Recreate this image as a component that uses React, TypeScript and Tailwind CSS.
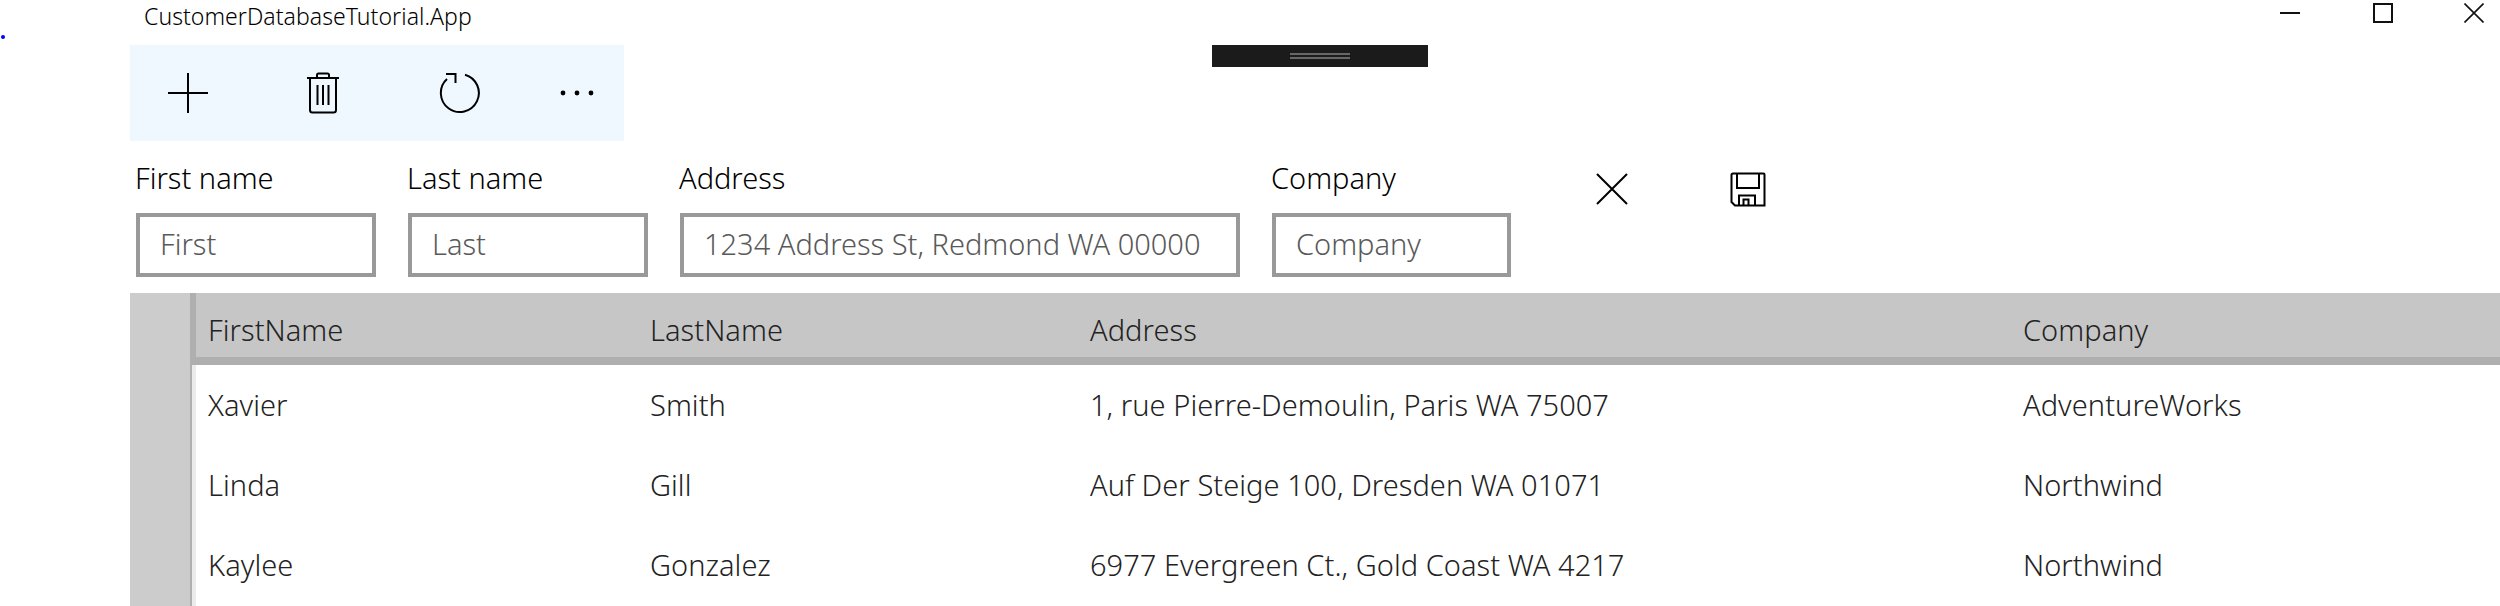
const fields = [
  { label: "First name", placeholder: "First", width: "w-[240px]" },
  { label: "Last name", placeholder: "Last", width: "w-[240px]" },
  { label: "Address", placeholder: "1234 Address St, Redmond WA 00000", width: "w-[560px]" },
  { label: "Company", placeholder: "Company", width: "w-[239px]" },
];

const columns = ["FirstName", "LastName", "Address", "Company"];

const customers = [
  ["Xavier", "Smith", "1, rue Pierre-Demoulin, Paris WA 75007", "AdventureWorks"],
  ["Linda", "Gill", "Auf Der Steige 100, Dresden WA 01071", "Northwind"],
  ["Kaylee", "Gonzalez", "6977 Evergreen Ct., Gold Coast WA 4217", "Northwind"],
];

function Cells({ values }: { values: string[] }) {
  return (
    <>
      <span className="w-[442px] shrink-0">{values[0]}</span>
      <span className="w-[440px] shrink-0">{values[1]}</span>
      <span className="w-[933px] shrink-0">{values[2]}</span>
      <span className="shrink-0">{values[3]}</span>
    </>
  );
}

export default function App() {
  return (
    <div className="relative flex h-[606px] w-[2500px] flex-col overflow-hidden bg-white font-['Noto_Sans',sans-serif] font-light text-black">
      <span className="absolute left-[1px] top-[35px] h-[4px] w-[4px] rounded-full bg-[#0000ff]" />

      <div className="flex h-[45px] shrink-0 items-start justify-between">
        <span className="pl-[144px] text-[23px] leading-[32px] tracking-[0.05px]">CustomerDatabaseTutorial.App</span>
        <div className="flex items-start">
          <svg width="20" height="4" viewBox="0 0 20 4" className="mr-[73px] mt-[11px]">
            <path d="M0 2H20" stroke="#111" strokeWidth="2" />
          </svg>
          <svg width="20" height="20" viewBox="0 0 20 20" className="mr-[71px] mt-[3px]">
            <rect x="1" y="1" width="18" height="18" fill="none" stroke="#111" strokeWidth="2" />
          </svg>
          <svg width="20" height="20" viewBox="0 0 20 20" className="mr-[16px] mt-[3px]">
            <path d="M0.5 0.5L19.5 19.5M19.5 0.5L0.5 19.5" stroke="#111" strokeWidth="1.6" />
          </svg>
        </div>
      </div>

      <div className="flex h-[96px] shrink-0 items-start pl-[130px]">
        <div className="flex h-[96px] w-[494px] items-center bg-[#eff7ff] pl-[38px]">
          <svg width="40" height="40" viewBox="0 0 40 40" className="mr-[98px]">
            <path d="M20 0V40M0 20H40" stroke="#000" strokeWidth="2" />
          </svg>
          <svg width="34" height="42" viewBox="0 0 34 42" className="mr-[99px]">
            <path
              d="M1 6H33M4 6V38Q4 40.5 6.5 40.5H27.5Q30 40.5 30 38V6M11 6V3Q11 1.5 12.5 1.5H21.5Q23 1.5 23 3V6M11.5 13V33M17 13V33M22.5 13V33"
              fill="none"
              stroke="#000"
              strokeWidth="2"
            />
          </svg>
          <svg width="42" height="42" viewBox="0 0 42 42" className="mr-[79px]">
            <path
              d="M26 2.7A19 19 0 1 1 8 7M7 2H16.5V11"
              fill="none"
              stroke="#000"
              strokeWidth="2"
            />
          </svg>
          <svg width="34" height="6" viewBox="0 0 34 6">
            <circle cx="3" cy="3" r="2.4" />
            <circle cx="17" cy="3" r="2.4" />
            <circle cx="31" cy="3" r="2.4" />
          </svg>
        </div>
        <div className="ml-[588px] flex h-[22px] w-[216px] flex-col items-center justify-center gap-[2px] bg-[#1b1b1b]">
          <span className="h-[2px] w-[60px] bg-[#666666]" />
          <span className="h-[2px] w-[60px] bg-[#666666]" />
        </div>
      </div>

      <div className="flex h-[152px] shrink-0 items-start pl-[136px] pt-[17px]">
        <div className="flex gap-[32px]">
          {fields.map((field) => (
            <div key={field.label} className="flex flex-col gap-[15px]">
              <label className="-ml-[1px] text-[29px] leading-[40px]">{field.label}</label>
              <div
                className={`flex h-[64px] items-center border-4 border-[#999999] pb-[3px] pl-[20px] text-[29px] text-[#595959] ${field.width}`}
              >
                {field.placeholder}
              </div>
            </div>
          ))}
        </div>
        <svg width="32" height="32" viewBox="0 0 32 32" className="ml-[85px] mt-[15px]">
          <path d="M1 1L31 31M31 1L1 31" stroke="#000" strokeWidth="2" />
        </svg>
        <svg width="36" height="36" viewBox="0 0 36 36" className="ml-[102px] mt-[14px]">
          <path
            d="M3 1.5H33.5Q34.5 1.5 34.5 2.5V33.5H5L1.5 30V3Q1.5 1.5 3 1.5ZM7 1.5V16H29V1.5M9 33.5V23.5H25V33.5M13.5 33.5V27.5H18.5V33.5"
            fill="none"
            stroke="#000"
            strokeWidth="2"
          />
        </svg>
      </div>

      <div className="ml-[130px] flex min-h-0 flex-1">
        <div className="w-[60px] shrink-0 bg-[#cccccc]" />
        <div className="flex min-w-0 flex-1 flex-col text-[29px] tracking-[0.05px] text-[#222222]">
          <div className="flex h-[72px] shrink-0 items-center border-b-[8px] border-l-[6px] border-[#afafaf] bg-[#c6c6c6] pl-[12px] pt-[9px]">
            <Cells values={columns} />
          </div>
          <div className="flex flex-1 flex-col border-l-2 border-[#b0b0b0]">
            <div className="flex flex-1 flex-col border-l-4 border-[#ebebeb] pl-[12px]">
              {customers.map((row) => (
                <div key={row[0]} className="flex h-[80px] shrink-0 items-center">
                  <Cells values={row} />
                </div>
              ))}
            </div>
          </div>
        </div>
      </div>
    </div>
  );
}
